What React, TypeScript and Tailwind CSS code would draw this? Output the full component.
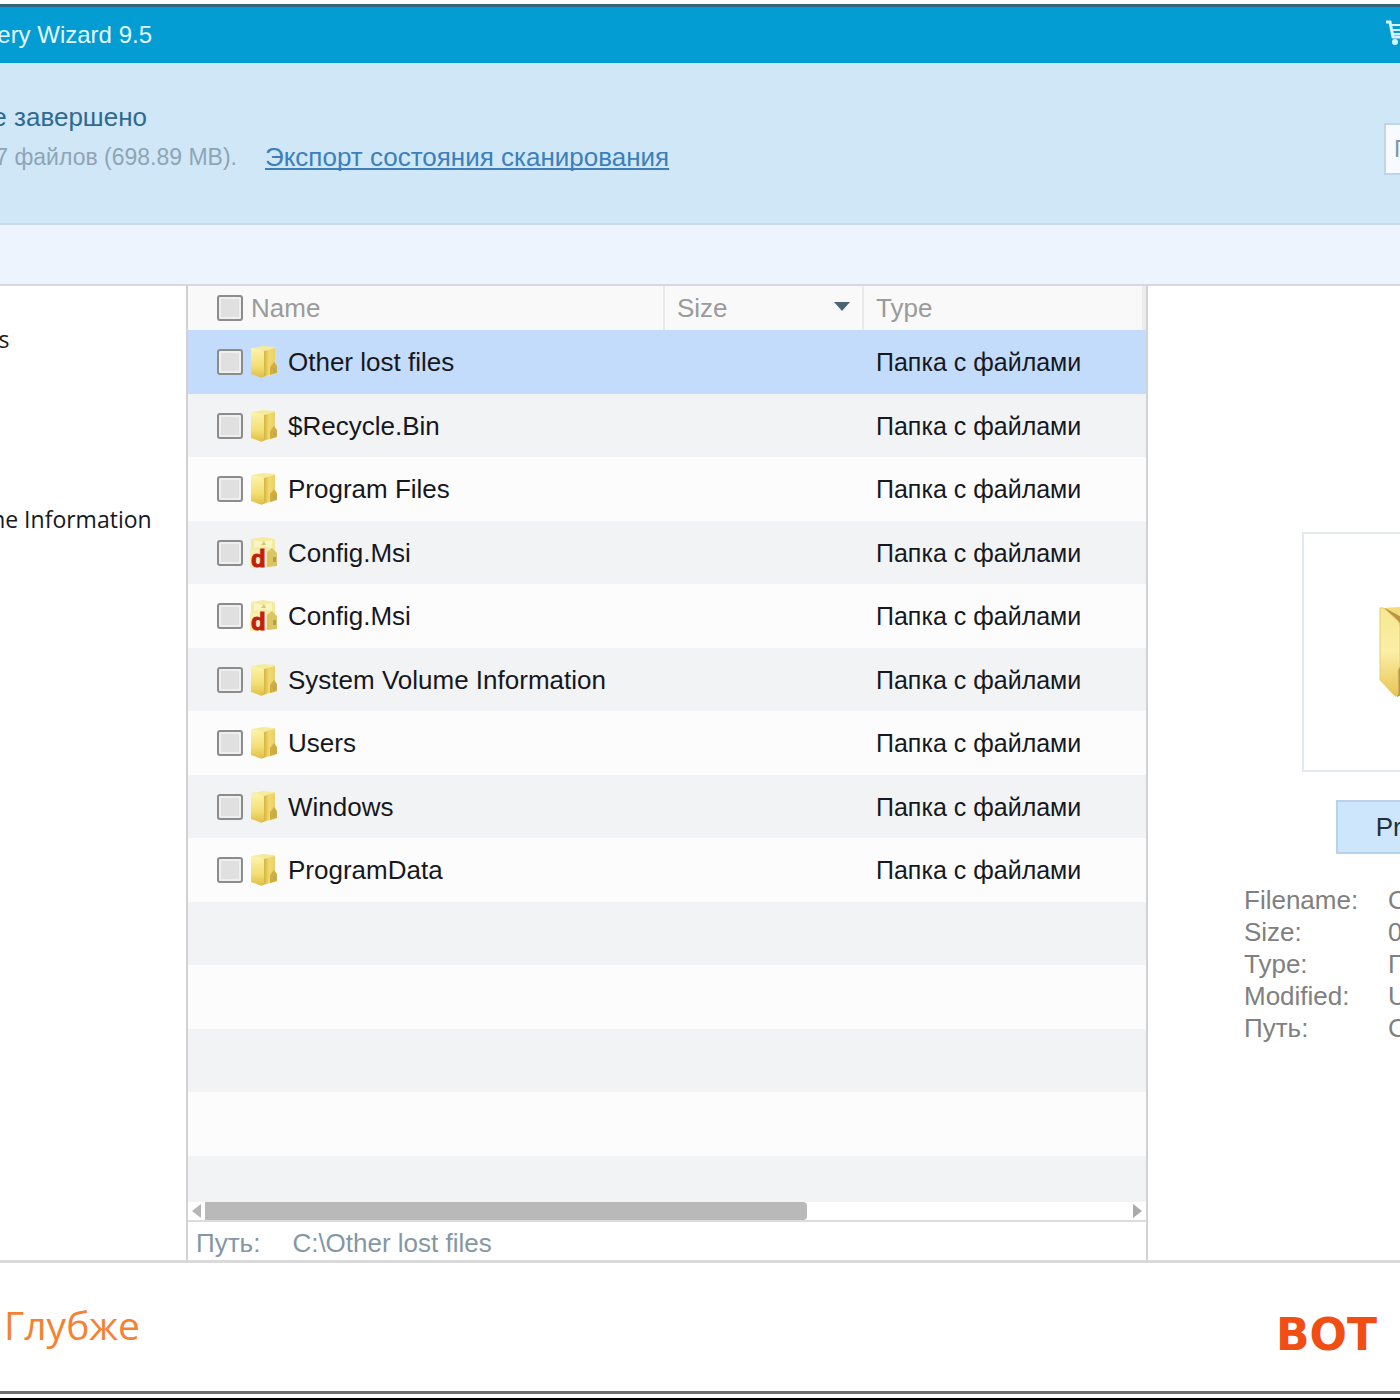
import { useState } from 'react'

type FileRow = {
  name: string
  deleted?: boolean
}

const files: FileRow[] = [
  { name: 'Other lost files' },
  { name: '$Recycle.Bin' },
  { name: 'Program Files' },
  { name: 'Config.Msi', deleted: true },
  { name: 'Config.Msi', deleted: true },
  { name: 'System Volume Information' },
  { name: 'Users' },
  { name: 'Windows' },
  { name: 'ProgramData' },
]

const emptyRows = [0, 1, 2, 3]

const details = [
  { label: 'Filename:', value: 'Other lost files' },
  { label: 'Size:', value: '0 KB' },
  { label: 'Type:', value: 'Папка с файлами' },
  { label: 'Modified:', value: 'Unknown' },
  { label: 'Путь:', value: 'C:\\Other lost files' },
]

const checkboxClass =
  'size-[26px] shrink-0 appearance-none rounded-[3px] border-2 border-[#8c8c8c] bg-[#e0e0e0] shadow-[inset_0_0_0_2px_#efefef] checked:bg-[#4a90d9]'

const FolderIcon = () => (
  <svg viewBox="0 0 27 32" className="h-8 w-[27px] shrink-0" aria-hidden="true">
    <defs>
      <linearGradient id="front" x1="0" y1="0" x2="0" y2="1">
        <stop offset="0" stopColor="#fdf4ae" />
        <stop offset="0.6" stopColor="#f3df72" />
        <stop offset="1" stopColor="#dfbd45" />
      </linearGradient>
      <linearGradient id="back" x1="0" y1="0" x2="1" y2="0">
        <stop offset="0" stopColor="#cfab3a" />
        <stop offset="0.5" stopColor="#f0db70" />
        <stop offset="1" stopColor="#e9d068" />
      </linearGradient>
    </defs>
    <path d="M2 2 L13 0 L25 1 V28 L13 31 L2 28 Z" fill="#f5eb9c" />
    <path d="M14 5 L25 2 V27 L13 31 Z" fill="url(#back)" />
    <path d="M20 21 L24 16 L27 20 V27 L20 29 Z" fill="#d3ae3f" />
    <path d="M23 22 H26 V26 H23 Z" fill="#b3ac68" />
    <path d="M1 2 L11 4 Q14 5 14 8 V29 L12 32 L1 28 Z" fill="url(#front)" />
  </svg>
)

const DeletedFolderIcon = () => (
  <svg viewBox="0 0 27 32" className="h-8 w-[27px] shrink-0" aria-hidden="true">
    <path d="M1 2 L13 0 L25 2 V29 L13 30 L1 26 Z" fill="#f5eb9f" />
    <path d="M4 3 L13 5 L22 3 V11 L13 9 L4 11 Z" fill="#fbf5c6" />
    <path d="M11 8 L14 4 L16 8 Z" fill="#d8c777" />
    <path d="M17 15 L22 11 L27 16 V29 L17 30 Z" fill="#dcc562" />
    <path d="M23 20 H26 V25 H23 Z" fill="#a9a34e" />
    <path d="M0 13 H16 V31 H0 Z" fill="#f8eebc" />
    <text x="1" y="30" fontSize="24" fontWeight="bold" fontFamily="Liberation Sans, sans-serif" fill="#c41f0b" stroke="#c41f0b">
      d
    </text>
  </svg>
)

const LargeFolderIcon = () => (
  <svg viewBox="0 0 86 92" className="h-[92px] w-[86px]" aria-hidden="true">
    <defs>
      <linearGradient id="largeFront" x1="0" y1="0" x2="0" y2="1">
        <stop offset="0" stopColor="#f8e893" />
        <stop offset="0.5" stopColor="#fbeea6" />
        <stop offset="1" stopColor="#e9c553" />
      </linearGradient>
    </defs>
    <path d="M2 2 L40 0 L82 10 V78 L20 90 Z" fill="#f3dc7c" />
    <path d="M6 2 L24 12 V88 L18 91 Z" fill="#b9963f" />
    <path d="M1 2 Q3 1 6 3 L19 15 Q21 17 21 21 V60 L19 64 V87 Q18 92 15 89 L1 74 Z" fill="url(#largeFront)" stroke="#e3cc73" />
  </svg>
)

const CartIcon = () => (
  <svg viewBox="0 0 32 26" className="h-[26px] w-8 shrink-0" fill="none" stroke="#d8f4ff" strokeWidth="2" aria-hidden="true">
    <path d="M0 2 H4 L7 17 H26" strokeWidth="3" />
    <path d="M5 5 H29 L26 14 H7 M6 10 H27" />
    <circle cx="9" cy="22" r="3" fill="#d8f4ff" stroke="none" />
    <circle cx="24" cy="22" r="3" fill="#d8f4ff" stroke="none" />
  </svg>
)

const App = () => {
  const [selected, setSelected] = useState(0)
  const [search, setSearch] = useState('')

  return (
    <div className="flex min-h-screen flex-col overflow-hidden border-b-2 border-black bg-white pt-1 font-['Liberation_Sans',Arial,sans-serif] text-[26px] leading-8 text-[#16181d]">
      <div className="flex flex-1 flex-col border-t-[3px] border-[#31667c]">

        {/* Title bar */}
        <header className="flex h-14 items-center justify-between bg-[#039cd3]">
          <h1 className="flex w-[152px] justify-end text-2xl whitespace-nowrap text-[#e2f7ff]">Recovery Wizard 9.5</h1>
          <button type="button" aria-label="Cart" className="w-[14px] overflow-hidden pb-1">
            <CartIcon />
          </button>
        </header>

        {/* Scan status */}
        <section className="flex h-40 items-center justify-between bg-[#d0e7f8]">
          <div className="flex flex-col gap-2 pb-3">
            <p className="flex w-[147px] justify-end whitespace-nowrap text-[#2f6a8f]">Сканирование завершено</p>
            <div className="flex gap-7">
              <p className="flex w-[237px] justify-end text-[23px] leading-8 whitespace-nowrap text-[#8ea5b5]">137 файлов (698.89 MB).</p>
              <a href="#export" className="whitespace-nowrap text-[#3c7fbb] underline decoration-2 underline-offset-2 [text-decoration-skip-ink:none]">Экспорт состояния сканирования</a>
            </div>
          </div>
          <div className="w-4 overflow-hidden pt-3">
            <input
              type="text"
              aria-label="Поиск"
              placeholder="Поиск"
              value={search}
              onChange={(e) => setSearch(e.target.value)}
              className="block h-[52px] w-60 border-2 border-[#bfd6ea] bg-[#f7fbff] px-2 text-2xl placeholder-[#8496a6] outline-none"
            />
          </div>
        </section>

        {/* Toolbar */}
        <div className="h-[63px] border-t-2 border-b-2 border-t-[#ccd9e9] border-b-[#d3d9e2] bg-[#eef4fe]"></div>

        <main className="flex flex-1 border-b-[3px] border-[#dadada]">
          {/* Folder tree */}
          <aside className="w-[186px] shrink-0 overflow-hidden pt-9">
            <ul className="-ml-[147px] font-['Open_Sans','Noto_Sans',sans-serif] text-[23px]">
              {files.map((file, i) => (
                <li key={i} className="h-9 leading-[34px] whitespace-nowrap">
                  <a href="#tree">{file.name}</a>
                </li>
              ))}
            </ul>
          </aside>

          {/* File list */}
          <section className="flex min-w-0 flex-1 flex-col border-x-2 border-[#d2d2d4]">
            <table className="w-full table-fixed border-separate border-spacing-0 text-left">
              <thead>
                <tr className="h-11 bg-[#f9f9f9] text-[#9b9b9b]">
                  <th className="w-[477px] border-r-2 border-[#e9e9e9] p-0 pl-[29px] font-normal">
                    <label className="flex items-center gap-2">
                      <input type="checkbox" className={checkboxClass} />
                      Name
                    </label>
                  </th>
                  <th className="w-[199px] border-r-2 border-[#e9e9e9] p-0 px-3 font-normal">
                    <div className="flex items-center justify-between">
                      Size
                      <svg viewBox="0 0 16 9" className="mb-1 h-[9px] w-4" aria-hidden="true">
                        <path d="M0 0 H16 L8 9 Z" fill="#4d6475" />
                      </svg>
                    </div>
                  </th>
                  <th className="border-r-4 border-[#ececec] p-0 pl-3 font-normal">Type</th>
                </tr>
              </thead>
              <tbody>
                {files.map((file, i) => (
                  <tr
                    key={i}
                    onClick={() => setSelected(i)}
                    className={i === selected ? 'h-16 bg-[#c3dcfb]' : 'odd:h-16 odd:bg-[#fcfcfd] even:h-[63px] even:bg-[#f2f3f5]'}
                  >
                    <td className="p-0 pl-[29px]">
                      <label className="flex items-center gap-[7px]">
                        <input type="checkbox" className={checkboxClass} />
                        {file.deleted ? <DeletedFolderIcon /> : <FolderIcon />}
                        <span className="pl-1 whitespace-nowrap">{file.name}</span>
                      </label>
                    </td>
                    <td className="p-0"></td>
                    <td className="p-0 pl-3 text-[25px] whitespace-nowrap">Папка с файлами</td>
                  </tr>
                ))}
                {emptyRows.map((row) => (
                  <tr key={row} className="odd:h-16 odd:bg-[#fcfcfd] even:h-[63px] even:bg-[#f2f3f5]">
                    <td className="p-0"></td>
                    <td className="p-0"></td>
                    <td className="p-0"></td>
                  </tr>
                ))}
              </tbody>
            </table>
            <div className="min-h-[46px] flex-1 bg-[#f2f3f5]"></div>

            {/* Horizontal scrollbar */}
            <div className="flex h-[18px] items-center justify-between px-1">
              <div className="flex flex-1 items-center gap-1">
                <svg viewBox="0 0 9 14" className="h-[14px] w-[9px]" aria-hidden="true">
                  <path d="M9 0 V14 L0 7 Z" fill="#b5b5b5" />
                </svg>
                <div className="h-[18px] w-[64%] rounded-r-sm bg-[#b9b9b9]"></div>
              </div>
              <svg viewBox="0 0 9 14" className="h-[14px] w-[9px]" aria-hidden="true">
                <path d="M0 0 V14 L9 7 Z" fill="#aaaaaa" />
              </svg>
            </div>

            <div className="flex h-10 items-center gap-8 border-t-2 border-[#dcdcdc] px-2 pt-1 text-[#8397a5]">
              <span>Путь:</span>
              <span>C:\Other lost files</span>
            </div>
          </section>

          {/* Preview panel */}
          <aside className="w-[252px] shrink-0 overflow-hidden pt-[246px] pl-24">
            <div className="flex w-[356px] flex-col items-center">
              <div className="flex h-60 w-60 items-center justify-center border-2 border-[#e3e7f0]">
                <LargeFolderIcon />
              </div>
              <button type="button" className="mt-7 h-[54px] w-[172px] border-2 border-[#b7d3ea] bg-[#cde6fb] text-[#24303c]">
                Preview
              </button>
            </div>
            <dl className="mt-[30px] text-[#808080]">
              {details.map((item) => (
                <div key={item.label} className="flex whitespace-nowrap">
                  <dt className="w-36 shrink-0">{item.label}</dt>
                  <dd>{item.value}</dd>
                </div>
              ))}
            </dl>
          </aside>
        </main>

        {/* Footer */}
        <footer className="flex h-32 items-center justify-between pl-1">
          <a href="#deeper" className="pb-1 font-['Open_Sans','Noto_Sans',sans-serif] text-[39px] leading-[48px] text-[#f58233]">Глубже</a>
          <a href="#recover" className="w-[124px] overflow-hidden pt-4 font-['DejaVu_Sans',sans-serif] text-[44px] leading-[48px] font-bold text-[#f04e14]">ВОТ</a>
        </footer>
        <div className="h-[7px] border-t-[3px] border-[#6e6e6e]"></div>
      </div>
    </div>
  )
}

export default App
